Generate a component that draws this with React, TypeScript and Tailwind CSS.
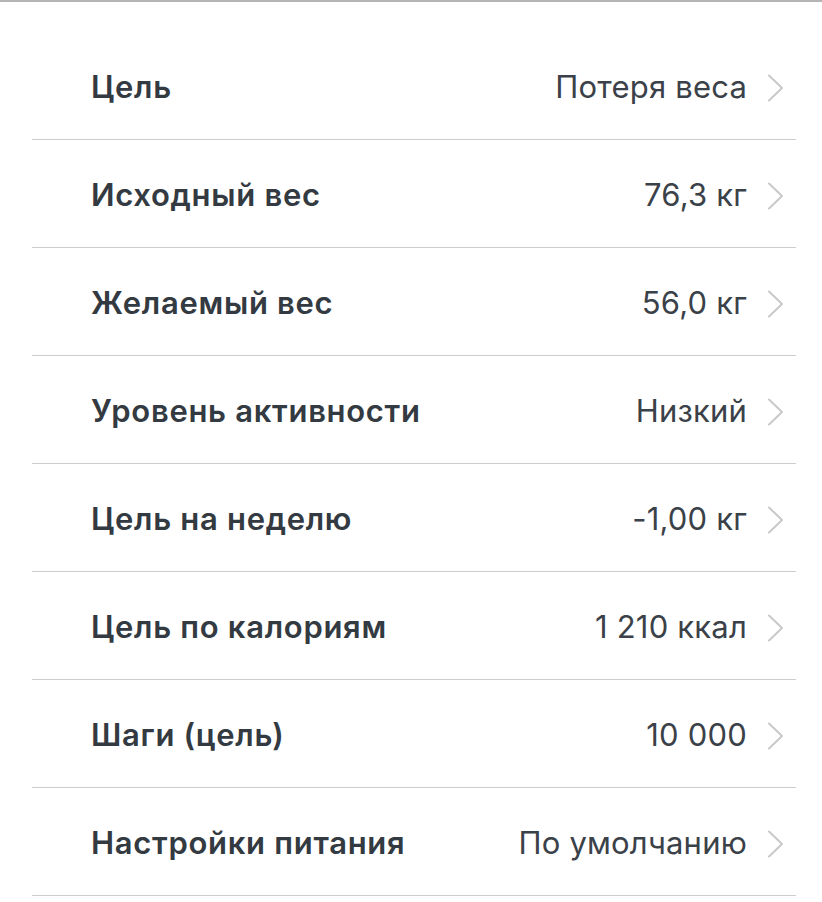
interface SettingRow {
  label: string;
  value: string;
}

const rows: SettingRow[] = [
  { label: 'Цель', value: 'Потеря веса' },
  { label: 'Исходный вес', value: '76,3 кг' },
  { label: 'Желаемый вес', value: '56,0 кг' },
  { label: 'Уровень активности', value: 'Низкий' },
  { label: 'Цель на неделю', value: '-1,00 кг' },
  { label: 'Цель по калориям', value: '1 210 ккал' },
  { label: 'Шаги (цель)', value: '10 000' },
  { label: 'Настройки питания', value: 'По умолчанию' },
];

function Chevron() {
  return (
    <svg width="17" height="28" viewBox="0 0 17 28" fill="none" className="ml-[20px] shrink-0">
      <path d="M2 1.5L15 14L2 26.5" stroke="#c9c9c9" strokeWidth="2" strokeLinecap="round" strokeLinejoin="round" />
    </svg>
  );
}

export default function App() {
  return (
    <div
      className="min-h-screen w-full bg-white border-t-2 border-[#b4b4b4]"
      style={{ fontFamily: 'Inter, "Noto Sans", sans-serif' }}
    >
      <div className="pl-8 pr-[26px] pt-[30px]">
        {rows.map((row) => (
          <div
            key={row.label}
            className="flex h-[108px] items-center border-b border-[#cdcdcd] pl-[59px] pr-[12px] pt-[4px]"
          >
            <span className="flex-1 text-[31px] font-semibold text-[#333a41] tracking-[0.7px]">
              {row.label}
            </span>
            <span className="text-[31px] font-normal text-[#3b4148] tracking-[0.2px]">{row.value}</span>
            <Chevron />
          </div>
        ))}
      </div>
    </div>
  );
}
